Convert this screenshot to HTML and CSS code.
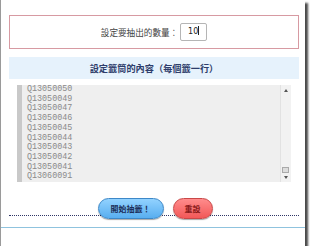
FILE: index.html
```html
<!DOCTYPE html>
<html>
<head>
<meta charset="utf-8">
<link rel="stylesheet" href="styles.css">
</head>
<body>
<div class="frame">
  <div class="count-box">
    <span class="label">設定要抽出的數量：</span>
    <span class="num-input">10<span class="caret"></span></span>
  </div>
  <div class="heading">設定籤筒的內容（每個籤一行）</div>
  <div class="textarea">
    <div class="gutter"></div>
    <div class="lines">
      <div>Q13050050</div>
      <div>Q13050049</div>
      <div>Q13050047</div>
      <div>Q13050046</div>
      <div>Q13050045</div>
      <div>Q13050044</div>
      <div>Q13050043</div>
      <div>Q13050042</div>
      <div>Q13050041</div>
      <div>Q13060091</div>
    </div>
    <div class="scrollbar">
      <span class="arrow up"></span>
      <span class="thumb"></span>
      <span class="arrow down"></span>
    </div>
  </div>
  <div class="actions">
    <span class="btn btn-blue">開始抽籤！</span>
    <span class="btn btn-red">重設</span>
  </div>
  <div class="footer-line"></div>
</div>
</body>
</html>
```
FILE: styles.css
```css
html, body {
  margin: 0;
  padding: 0;
  background: #ffffff;
}
.frame {
  width: 305px;
  height: 246px;
  box-sizing: border-box;
  border-left: 1px solid #9a9a9a;
  background: #fff;
  box-shadow: 3px 3px 2px #4a4a4a;
  padding-top: 15px;
  font-family: "Noto Sans CJK TC", "Noto Sans", sans-serif;
}
.count-box {
  margin: 0 6px 0 8px;
  height: 34px;
  box-sizing: border-box;
  border: 1px solid #d79aa2;
  display: flex;
  align-items: center;
  justify-content: center;
  font-size: 8.6px;
  color: #444;
}
.num-input {
  display: inline-block;
  width: 27px;
  height: 18px;
  box-sizing: border-box;
  border: 1px solid #b5b5b5;
  border-radius: 2px;
  margin-left: 2px;
  font-family: "DejaVu Sans", sans-serif;
  font-size: 8px;
  line-height: 16px;
  text-align: center;
  color: #222;
}
.caret {
  display: inline-block;
  width: 1px;
  height: 9px;
  background: #222;
  vertical-align: -1px;
}
.heading {
  margin: 8px 6px 0 8px;
  height: 22px;
  background: #e6f2fc;
  color: #2e3d6b;
  font-weight: bold;
  font-size: 9.2px;
  display: flex;
  align-items: center;
  justify-content: center;
}
.textarea {
  margin: 6px 14px 0 16px;
  height: 97px;
  background: #efefef;
  display: flex;
  overflow: hidden;
}
.gutter {
  width: 5px;
  background: #c9c9c9;
}
.lines {
  flex: 1;
  padding: 0 0 0 5px;
  font-family: "Liberation Mono", monospace;
  font-size: 8.4px;
  line-height: 9.7px;
  color: #8a8a8a;
}
.scrollbar {
  width: 10px;
  position: relative;
  background: #f2f2f2;
  border-left: 1px solid #e2e2e2;
}
.arrow {
  position: absolute;
  left: 3px;
  width: 0;
  height: 0;
  border-left: 2px solid transparent;
  border-right: 2px solid transparent;
}
.arrow.up {
  top: 4px;
  border-bottom: 3px solid #555;
}
.arrow.down {
  bottom: 3px;
  border-top: 3px solid #555;
}
.thumb {
  position: absolute;
  left: 1px;
  bottom: 9px;
  width: 7px;
  height: 6px;
  background: #ddd;
  border: 1px solid #aaa;
  box-sizing: border-box;
}
.actions {
  margin: 16px 6px 0 8px;
  height: 17px;
  border-bottom: 1px dotted #2f3566;
  display: flex;
  justify-content: center;
  align-items: flex-start;
  gap: 9px;
}
.btn {
  height: 21px;
  box-sizing: border-box;
  border-radius: 11px;
  display: flex;
  align-items: center;
  justify-content: center;
  font-weight: bold;
  font-size: 8px;
  box-shadow: 0 1px 1px rgba(0,0,0,0.35);
  flex: none;
}
.btn-blue {
  width: 66px;
  background: linear-gradient(#92d2ff, #58aef0);
  border: 1px solid #3d88c8;
  color: #1c2f5a;
  margin-left: 2px;
}
.btn-red {
  width: 40px;
  background: linear-gradient(#ff8c8c, #f25858);
  border: 1px solid #c94848;
  color: #8a1a1a;
}
.footer-line {
  margin-top: 11px;
  height: 1px;
  background: #8fc3de;
}
```
